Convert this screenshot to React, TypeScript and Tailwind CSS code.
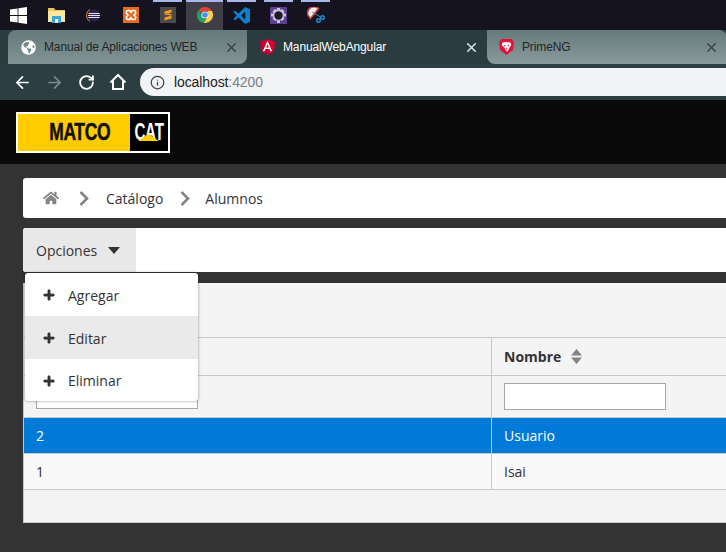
import { ArrowLeft, ArrowRight, Info, RotateCw, X } from "lucide-react";
import { FaGlobeAmericas, FaHome, FaPlus } from "react-icons/fa";

const FONT = "font-['Open_Sans',sans-serif]";

// ---- taskbar app icons ----

function WindowsIcon() {
  return (
    <svg width="17" height="17" viewBox="0 0 17 17">
      <path fill="#fff" d="M0 2.5 7.6 1.4V8H0zM8.4 1.3 17 0v8H8.4zM0 9h7.6v6.6L0 14.5zM8.4 9H17v8l-8.6-1.3z" />
    </svg>
  );
}

function FolderIcon() {
  return (
    <svg width="17" height="15" viewBox="0 0 17 15">
      <path fill="#e8c65a" d="M0 0h6l1.5 2H17v2H0z" />
      <path fill="#fbe79e" d="M0 3h17v11H0z" />
      <path fill="#3aa7df" d="M4 15V8h9v7h-3v-4H7v4z" />
      <path fill="#fff" d="M7 11h3v4H7z" opacity="0.85" />
    </svg>
  );
}

function EclipseIcon() {
  return (
    <svg width="15" height="15" viewBox="0 0 15 15">
      <circle cx="8" cy="7.5" r="6" fill="#2c2255" />
      <path d="M4 1.5A7 7 0 0 0 4 13.5" fill="none" stroke="#f7941e" strokeWidth="1" />
      <path d="M2.5 5.5h11M2 7.5h12M2.5 9.5h11" stroke="#e8e6f2" strokeWidth="1" />
    </svg>
  );
}

function XamppIcon() {
  return (
    <svg width="16" height="16" viewBox="0 0 16 16">
      <rect width="16" height="16" fill="#e66b1f" />
      <path
        d="M5 3.5h1.7L8 5.3l1.3-1.8H11a1.6 1.6 0 0 1 1.6 1.6v1.2L11 8l1.6 1.7v1.2A1.6 1.6 0 0 1 11 12.5H9.3L8 10.7l-1.3 1.8H5a1.6 1.6 0 0 1-1.6-1.6V9.7L5 8 3.4 6.3V5.1A1.6 1.6 0 0 1 5 3.5z"
        fill="none"
        stroke="#fff"
        strokeWidth="1.6"
      />
    </svg>
  );
}

function SublimeIcon() {
  return (
    <svg width="16" height="16" viewBox="0 0 16 16">
      <rect width="16" height="16" fill="#4a4a48" />
      <path fill="#f79a1e" d="M11.5 2.5v3L4.5 7.6v-3zM11.5 8.4v3l-7 2.1v-3zM4.5 7.6l7 .8v-1l-4-1.2z" />
    </svg>
  );
}

function ChromeIcon() {
  return (
    <svg width="16" height="16" viewBox="0 0 16 16">
      <path fill="#dd4437" d="M8 0a8 8 0 0 1 6.93 4H8a4 4 0 0 0-3.7 2.5L1.6 2.9A8 8 0 0 1 8 0z" />
      <path fill="#1da462" d="M1.6 2.9l3.4 6A4 4 0 0 0 9 11.9L6.8 15.9A8 8 0 0 1 1.6 2.9z" />
      <path fill="#ffcd46" d="M14.93 4A8 8 0 0 1 6.8 15.9l3.5-6A4 4 0 0 0 11 5.5 4 4 0 0 0 10 4z" />
      <circle cx="8" cy="8" r="3.6" fill="#fff" />
      <circle cx="8" cy="8" r="2.8" fill="#4c8bf5" />
    </svg>
  );
}

function VsCodeIcon() {
  return (
    <svg width="17" height="17" viewBox="0 0 17 17">
      <path fill="#0f7ecb" d="M12.2 0 17 2.2v12.6L12.2 17 5.5 10.6 2 13.3.2 12.3 3.6 8.5.2 4.7 2 3.7l3.5 2.7zM12.2 4.6 8 8.5l4.2 3.9z" />
    </svg>
  );
}

function GearIcon() {
  return (
    <svg width="17" height="17" viewBox="0 0 17 17">
      <path fill="#5a3f94" d="M1 0h15a1 1 0 0 1 1 1v16H0V1a1 1 0 0 1 1-1z" />
      <path fill="#c9c6cf" d="M7 1h3v2l2-1 2.500 2.500-1 2h2.500v3H13.500l1 2L12 14l-2-1v3H7v-3l-2 1-2.500-2.500 1-2H1v-3h2.500l-1-2L5 2l2 1z" />
      <circle cx="8.500" cy="8.500" r="4.200" fill="#1d1a2b" />
    </svg>
  );
}

function SnipIcon() {
  return (
    <svg width="18" height="16" viewBox="0 0 18 16">
      <path d="M.8 8A6.500 6.500 0 0 1 11.500 1.500L3.500 11.500z" fill="#f3eeee" stroke="#c8454a" strokeWidth="1.600" />
      <path d="M5 5l8.500 5" stroke="#7a7a7a" strokeWidth="1" />
      <circle cx="11.500" cy="13.500" r="1.800" fill="none" stroke="#1f8ad0" strokeWidth="1.400" />
      <circle cx="15.500" cy="10.500" r="1.800" fill="none" stroke="#1f8ad0" strokeWidth="1.400" />
    </svg>
  );
}

// ---- favicons ----

function AngularIcon() {
  return (
    <svg width="15" height="16" viewBox="0 0 15 16">
      <path fill="#dd0031" d="M7.500 0 15 2.700l-1.200 9.900L7.500 16z" />
      <path fill="#c3002f" d="M7.500 0 0 2.700l1.200 9.900L7.500 16z" />
      <path fill="#fff" d="M7.500 1.800 2.800 12.300h1.750l.95-2.350h4l.95 2.350h1.750zM8.850 8.500h-2.700L7.500 5.250z" />
    </svg>
  );
}

function BraveIcon() {
  return (
    <svg width="15" height="16" viewBox="0 0 15 16">
      <path fill="#e3123b" d="M2.500 0h10L15 3l-1 8-6.500 5L1 11 0 3z" />
      <path fill="#fff" d="M3.500 3.500 7.500 3l4 .5.800 2.500-1.800 2.500-1.200 3-1.300 1-1.300-1-1.200-3L2.700 6z" />
      <path fill="#e3123b" d="M4.500 5.500 6.700 6.500 6 7.700zM10.500 5.500 8.300 6.500 9 7.700zM7.200 8.500h.6v3h-.6z" />
    </svg>
  );
}

function HomeOutlineIcon() {
  return (
    <svg width="18" height="18" viewBox="0 0 18 18" fill="none" stroke="#fff" strokeWidth="2">
      <path d="M1.500 9.500 9 2l7.500 7.500M4 8v8h10V8" strokeLinejoin="miter" />
    </svg>
  );
}

function BreadcrumbChevron({ className }: { className: string }) {
  return (
    <svg className={className} width="10" height="15" viewBox="0 0 10 15" fill="none" stroke="#848484" strokeWidth="2.6">
      <path d="M1.500 1l6.500 6.500-6.500 6.500" />
    </svg>
  );
}

function SortIcon() {
  return (
    <svg className="ml-[10px]" width="11" height="15" viewBox="0 0 11 15" fill="#848484">
      <path d="M5.500 0 11 6.500H0zM0 8.500h11L5.500 15z" />
    </svg>
  );
}

// ---- logo ----

function MatcoLogo() {
  return (
    <div className="flex h-[41px] w-[154px] border-2 border-white">
      <div className="flex w-[112px] shrink-0 items-center justify-end bg-[#ffcc00] pr-[20px]">
        <span className="shrink-0 origin-right scale-x-[0.76] font-['Liberation_Sans',sans-serif] text-[23px] font-bold tracking-[-0.5px] text-[#111] [-webkit-text-stroke:0.5px_#111]">
          MATCO
        </span>
      </div>
      <div className="relative flex w-[38px] shrink-0 items-center justify-center bg-black">
        <span className="shrink-0 scale-x-[0.66] font-['Liberation_Sans',sans-serif] text-[23px] leading-none font-bold tracking-[-0.5px] text-white">
          CAT
        </span>
        <svg className="absolute bottom-[10px] left-[8px]" width="21" height="7" viewBox="0 0 21 7">
          <path fill="#ffcc00" d="M10.500 0 21 7H0z" />
        </svg>
      </div>
    </div>
  );
}

// ---- browser chrome ----

function Tab({
  title,
  icon,
  active,
  className,
}: {
  title: string;
  icon: React.ReactNode;
  active?: boolean;
  className: string;
}) {
  return (
    <div className={`flex h-[34px] shrink-0 items-center pr-[8px] ${className}`}>
      <span className="flex w-[23px] shrink-0 items-center">{icon}</span>
      <span className={`flex-1 truncate font-['Liberation_Sans',sans-serif] text-[12px] tracking-[-0.13px] ${active ? "text-white" : "text-[#20262a]"}`}>
        {title}
      </span>
      <X size={15} strokeWidth={2.4} className={active ? "text-[#dfe3e4]" : "text-[#3b4446]"} />
    </div>
  );
}

function BrowserChrome() {
  const apps = [
    { icon: <FolderIcon /> },
    { icon: <EclipseIcon /> },
    { icon: <XamppIcon /> },
    { icon: <SublimeIcon />, open: true },
    { icon: <ChromeIcon />, open: true, active: true },
    { icon: <VsCodeIcon />, open: true },
    { icon: <GearIcon />, open: true },
    { icon: <SnipIcon />, open: true },
  ];

  return (
    <>
      {/* Windows taskbar */}
      <div className="flex h-[30px] bg-[#15131f]">
        <div className="flex w-[38px] items-center justify-center pr-[2px]">
          <WindowsIcon />
        </div>
        {apps.map((app, i) => (
          <div key={i} className={`relative flex w-[37px] items-center justify-center ${app.active ? "bg-[#3f3e47]" : ""}`}>
            {app.open && <div className={`absolute top-0 h-[2px] bg-[#a9b6e8] ${app.active ? "inset-x-0" : "inset-x-[4px]"}`} />}
            {app.icon}
          </div>
        ))}
      </div>

      {/* tab strip */}
      <div className="flex h-[34px] bg-[#2b3c40] pl-[8px]">
        <Tab
          title="Manual de Aplicaciones WEB"
          icon={<FaGlobeAmericas size={15} className="text-white" />}
          className="w-[239px] rounded-tl-[8px] rounded-br-[8px] bg-gradient-to-b from-[#657a7b] to-[#829393] pl-[13px]"
        />
        <Tab title="ManualWebAngular" icon={<AngularIcon />} active className="w-[240px] rounded-t-[8px] bg-[#2b3c40] pl-[13px]" />
        <Tab
          title="PrimeNG"
          icon={<BraveIcon />}
          className="w-[240px] rounded-tr-[8px] rounded-bl-[8px] bg-gradient-to-b from-[#667a7b] to-[#8a9b9b] pl-[12px]"
        />
      </div>

      {/* toolbar */}
      <div className="flex h-[36px] items-center bg-[#2d3e42] pl-[13px]">
        <ArrowLeft size={19} strokeWidth={2.2} className="text-white" />
        <ArrowRight size={19} strokeWidth={2.2} className="ml-[13px] text-[#7d8a8c]" />
        <RotateCw size={17} strokeWidth={2.6} className="ml-[14px] text-white" />
        <span className="ml-[14px] flex">
          <HomeOutlineIcon />
        </span>
        <div className="ml-[13px] flex h-[28px] flex-1 items-center rounded-l-[14px] bg-[#f1f3f4] pl-[10px]">
          <Info size={15} strokeWidth={2} className="text-[#3c4043]" />
          <span className="ml-[9px] font-['Liberation_Sans',sans-serif] text-[14px] tracking-[-0.1px] text-[#202124]">
            localhost<span className="text-[#7b7f84]">:4200</span>
          </span>
        </div>
      </div>
    </>
  );
}

// ---- app ----

const MENU_ITEMS = ["Agregar", "Editar", "Eliminar"];

export default function App() {
  return (
    <div className={`h-[552px] w-[726px] overflow-hidden bg-[#333] ${FONT}`}>
      <BrowserChrome />

      <header className="flex h-[64px] items-center bg-[#0a0a0a] pl-[16px]">
        <MatcoLogo />
      </header>

      <main className="relative pl-[23px] pt-[14px]">
        {/* breadcrumb */}
        <nav className="flex h-[40px] items-center rounded-l-[3px] bg-white pl-[20px] text-[14px] text-[#333]">
          <FaHome size={16} className="text-[#848484]" />
          <BreadcrumbChevron className="ml-[20px] mr-[17px]" />
          <span>Catálogo</span>
          <BreadcrumbChevron className="ml-[17px] mr-[15px]" />
          <span>Alumnos</span>
        </nav>

        {/* menubar */}
        <div className="mt-[10px] flex h-[44px] rounded-l-[3px] bg-white">
          <div className="flex w-[113px] items-center rounded-l-[3px] bg-[#e8e8e8] pl-[13px] pt-[1px] text-[14px] text-[#333]">
            Opciones
            <svg className="ml-[11px] mb-[1px]" width="12" height="7" viewBox="0 0 12 7" fill="#333">
              <path d="M0 0h12L6 7z" />
            </svg>
          </div>
        </div>

        {/* dropdown */}
        <ul className="absolute left-[25px] top-[109px] z-10 w-[173px] rounded-[3px] bg-white text-[14px] text-[#333] shadow-[0_0_3px_rgba(0,0,0,0.45)]">
          {MENU_ITEMS.map((item) => (
            <li
              key={item}
              className={`flex items-center pl-[18px] pt-[1px] ${item === "Eliminar" ? "h-[42px]" : "h-[43px]"} ${item === "Editar" ? "bg-[#eaeaea]" : ""}`}
            >
              <FaPlus size={12} className="mr-[13px] text-[#333] [stroke-width:25px] [stroke:#333]" />
              {item}
            </li>
          ))}
        </ul>

        {/* table panel */}
        <section className="mt-[11px] h-[240px] border-b border-l border-[#c8c8c8] bg-[#f4f4f4] text-[14px] text-[#333]">
          <div className="h-[54px]" />
          <div className="grid h-[39px] grid-cols-[468px_1fr] border-y border-[#c8c8c8]">
            <div className="border-r border-[#c8c8c8]" />
            <div className="flex items-center pb-[1px] pl-[12px] font-bold">
              Nombre
              <SortIcon />
            </div>
          </div>
          <div className="grid h-[41px] grid-cols-[468px_1fr]">
            <div className="border-r border-[#c8c8c8] pl-[12px] pt-[6px]">
              <div className="h-[27px] w-[162px] border border-[#a6a6a6] bg-white" />
            </div>
            <div className="pl-[12px] pt-[7px]">
              <input className="block h-[27px] w-[162px] border border-[#a6a6a6] bg-white" />
            </div>
          </div>
          <div className="grid h-[37px] grid-cols-[468px_1fr] border-y border-[#c8c8c8] bg-[#007ad9] text-white">
            <div className="flex items-center border-r border-[#c8c8c8] pl-[12px]">2</div>
            <div className="flex items-center pl-[12px]">Usuario</div>
          </div>
          <div className="grid h-[36px] grid-cols-[468px_1fr] border-b border-[#c8c8c8] bg-[#f9f9f9]">
            <div className="flex items-center border-r border-[#c8c8c8] pl-[12px]">1</div>
            <div className="flex items-center pl-[12px]">Isai</div>
          </div>
        </section>
      </main>
    </div>
  );
}
